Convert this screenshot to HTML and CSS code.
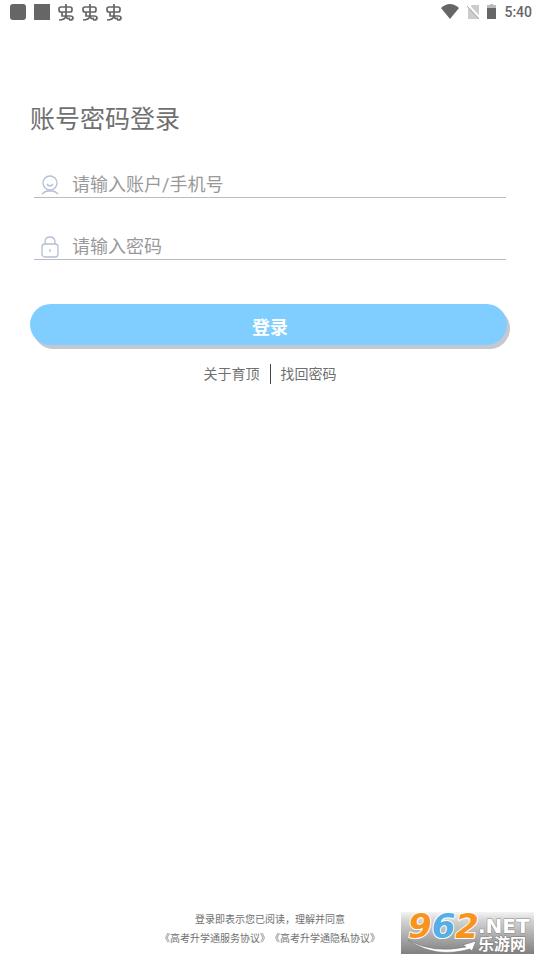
FILE: index.html
```html
<!DOCTYPE html>
<html lang="zh-CN">
<head>
<meta charset="utf-8">
<meta name="viewport" content="width=device-width, initial-scale=1">
<title>账号密码登录</title>
<link rel="stylesheet" href="styles.css">
</head>
<body>
<svg class="defs" aria-hidden="true">
  <symbol id="bug" viewBox="0 0 16 18">
    <path d="M3 4H12Q14 4 14 6V7Q14 9 12 9H3Q1 9 1 7V6Q1 4 3 4ZM8 1V14M4 9V13H12Q15 13 15 15Q15 17 12 17H11M8 13Q7 17 1 17M8 13Q9 17 12 15"/>
  </symbol>
</svg>
<header class="status">
  <div class="status-group">
    <span class="tile tile-round"></span>
    <span class="tile"></span>
    <svg class="bug"><use href="#bug"/></svg>
    <svg class="bug"><use href="#bug"/></svg>
    <svg class="bug"><use href="#bug"/></svg>
  </div>
  <div class="status-group status-right">
    <svg width="18" height="15" viewBox="0 0 18 15"><path fill="#666" d="M0 4Q9-4 18 4L9 15Z"/></svg>
    <svg width="12" height="14" viewBox="0 0 12 14"><path fill="#ccc" d="M5 0H12V14H1V4Z"/><path stroke="#fff" stroke-width="2" d="M2 1L14 14"/><path stroke="#aaa" d="M0 1L12 14"/></svg>
    <svg width="9" height="16" viewBox="0 0 9 16"><path fill="#bbb" d="M3 0H6V1H9V5H0V1H3Z"/><path fill="#666" d="M0 4H9V15H0Z"/></svg>
    <span class="clock">5:40</span>
  </div>
</header>

<main class="login">
  <h1>账号密码登录</h1>
  <form>
    <div class="field">
      <label for="account" aria-label="账户">
        <svg width="20" height="22" viewBox="0 0 20 22"><circle cx="10" cy="9" r="7"/><path d="M7 10Q10 14 13 10M2 20Q5 17 8 17H12Q15 17 18 20"/></svg>
      </label>
      <input id="account" type="text" placeholder="请输入账户/手机号">
    </div>
    <div class="field">
      <label for="password" aria-label="密码">
        <svg width="20" height="22" viewBox="0 0 20 22"><rect x="2" y="8" width="16" height="13" rx="3"/><path d="M5 8V6Q5 1 10 1Q15 1 15 6V8M10 13V16"/></svg>
      </label>
      <input id="password" type="password" placeholder="请输入密码">
    </div>
    <button class="submit" type="submit">登录</button>
  </form>
  <nav class="links">
    <a href="#about">关于育顶</a>
    <a href="#recover">找回密码</a>
  </nav>
</main>

<footer class="terms">
  <p>登录即表示您已阅读，理解并同意</p>
  <p><a href="#service">《高考升学通服务协议》</a><a href="#privacy">《高考升学通隐私协议》</a></p>
</footer>

<svg class="badge" width="133" height="42" viewBox="0 0 133 42" role="img" aria-label="962.NET 乐游网">
  <defs>
    <linearGradient id="shade" x1="0" y1="0" x2="0" y2="1">
      <stop offset="0" stop-color="#f4f4f4"/><stop offset=".2" stop-color="#d4d4d4"/><stop offset="1" stop-color="#808080"/>
    </linearGradient>
  </defs>
  <rect width="133" height="42" fill="url(#shade)"/>
  <text class="digits" x="7" y="26"><tspan class="orange">9</tspan><tspan class="blue">6</tspan><tspan class="orange">2</tspan></text>
  <path fill="#fff" stroke="#777" stroke-width=".6" d="M7 28Q32 42 65 35L62 33L75 29L71 39L69 37Q34 47 7 28Z"/>
  <text class="net" x="77" y="21">.NET</text>
  <text class="site" x="77" y="38">乐游网</text>
</svg>
</body>
</html>
```
FILE: styles.css
```css
* {
  box-sizing: border-box;
}

body {
  position: relative;
  display: flex;
  flex-direction: column;
  min-height: 100vh;
  margin: 0;
  background: #fff;
  color: #707070;
  font-family: Roboto, "Noto Sans CJK SC", sans-serif;
}

a {
  color: inherit;
  text-decoration: none;
}

.defs {
  position: absolute;
  width: 0;
  height: 0;
}

.status {
  display: flex;
  justify-content: space-between;
  height: 24px;
  padding: 0 8px 0 10px;
}

.status-group {
  display: flex;
  align-items: center;
  gap: 8px;
}

.status-right {
  padding-bottom: 1px;
}

.tile {
  width: 16px;
  height: 16px;
  background: #666;
}

.tile-round {
  border-radius: 3px;
}

.bug {
  width: 16px;
  height: 18px;
  fill: none;
  stroke: #666;
  stroke-width: 1.7;
}

.clock {
  color: #666;
  font-size: 14px;
  font-weight: 500;
}

.login {
  flex: 1;
  padding: 78px 30px 0;
}

h1 {
  margin: 0;
  font-size: 25px;
  font-weight: 400;
  line-height: 36px;
}

.field {
  display: flex;
  align-items: center;
  gap: 12px;
  height: 26px;
  margin: 36px 4px;
  padding: 0 6px;
  border-bottom: 1px solid #bbbbc2;
}

h1 + form .field:first-child {
  margin-top: 34px;
}

.field label {
  display: flex;
}

.field svg {
  fill: none;
  stroke: #b4bed6;
  stroke-width: 1.3;
}

.field input {
  flex: 1;
  min-width: 0;
  padding: 0;
  border: 0;
  outline: 0;
  background: none;
  color: #666;
  font: inherit;
  font-size: 18px;
}

.field input::placeholder {
  color: #999;
}

.submit {
  display: block;
  width: calc(100% - 3px);
  height: 41px;
  margin-top: 44px;
  padding: 3px 0 0 3px;
  border: 0;
  border-radius: 21px;
  background: #80ceff;
  box-shadow: 3px 4px 0 #c5c8d2;
  color: #fff;
  font: inherit;
  font-size: 18px;
  font-weight: 700;
}

.links {
  display: flex;
  justify-content: center;
  margin-top: 19px;
  font-size: 14px;
  line-height: 20px;
}

.links a {
  padding: 0 10px;
}

.links a + a {
  border-left: 1px solid #444;
}

.terms {
  padding-bottom: 12px;
  font-size: 10px;
  line-height: 19px;
  text-align: center;
}

.terms p {
  display: flex;
  justify-content: center;
  margin: 0;
}

.badge {
  position: absolute;
  right: 6px;
  bottom: 6px;
  overflow: visible;
}

.badge text {
  paint-order: stroke;
  stroke-linejoin: round;
}

.digits {
  font: italic 700 34px "DejaVu Sans", sans-serif;
  stroke: #fff;
  stroke-width: 2;
}

.orange {
  fill: #f7941d;
}

.blue {
  fill: #55aee5;
}

.net {
  fill: #fff;
  font: 700 20px "DejaVu Sans", sans-serif;
  stroke: #888;
  stroke-width: 1;
}

.site {
  fill: #fff;
  font: 700 16px "Noto Sans CJK SC", sans-serif;
  stroke: #777;
  stroke-width: 1;
}
```
